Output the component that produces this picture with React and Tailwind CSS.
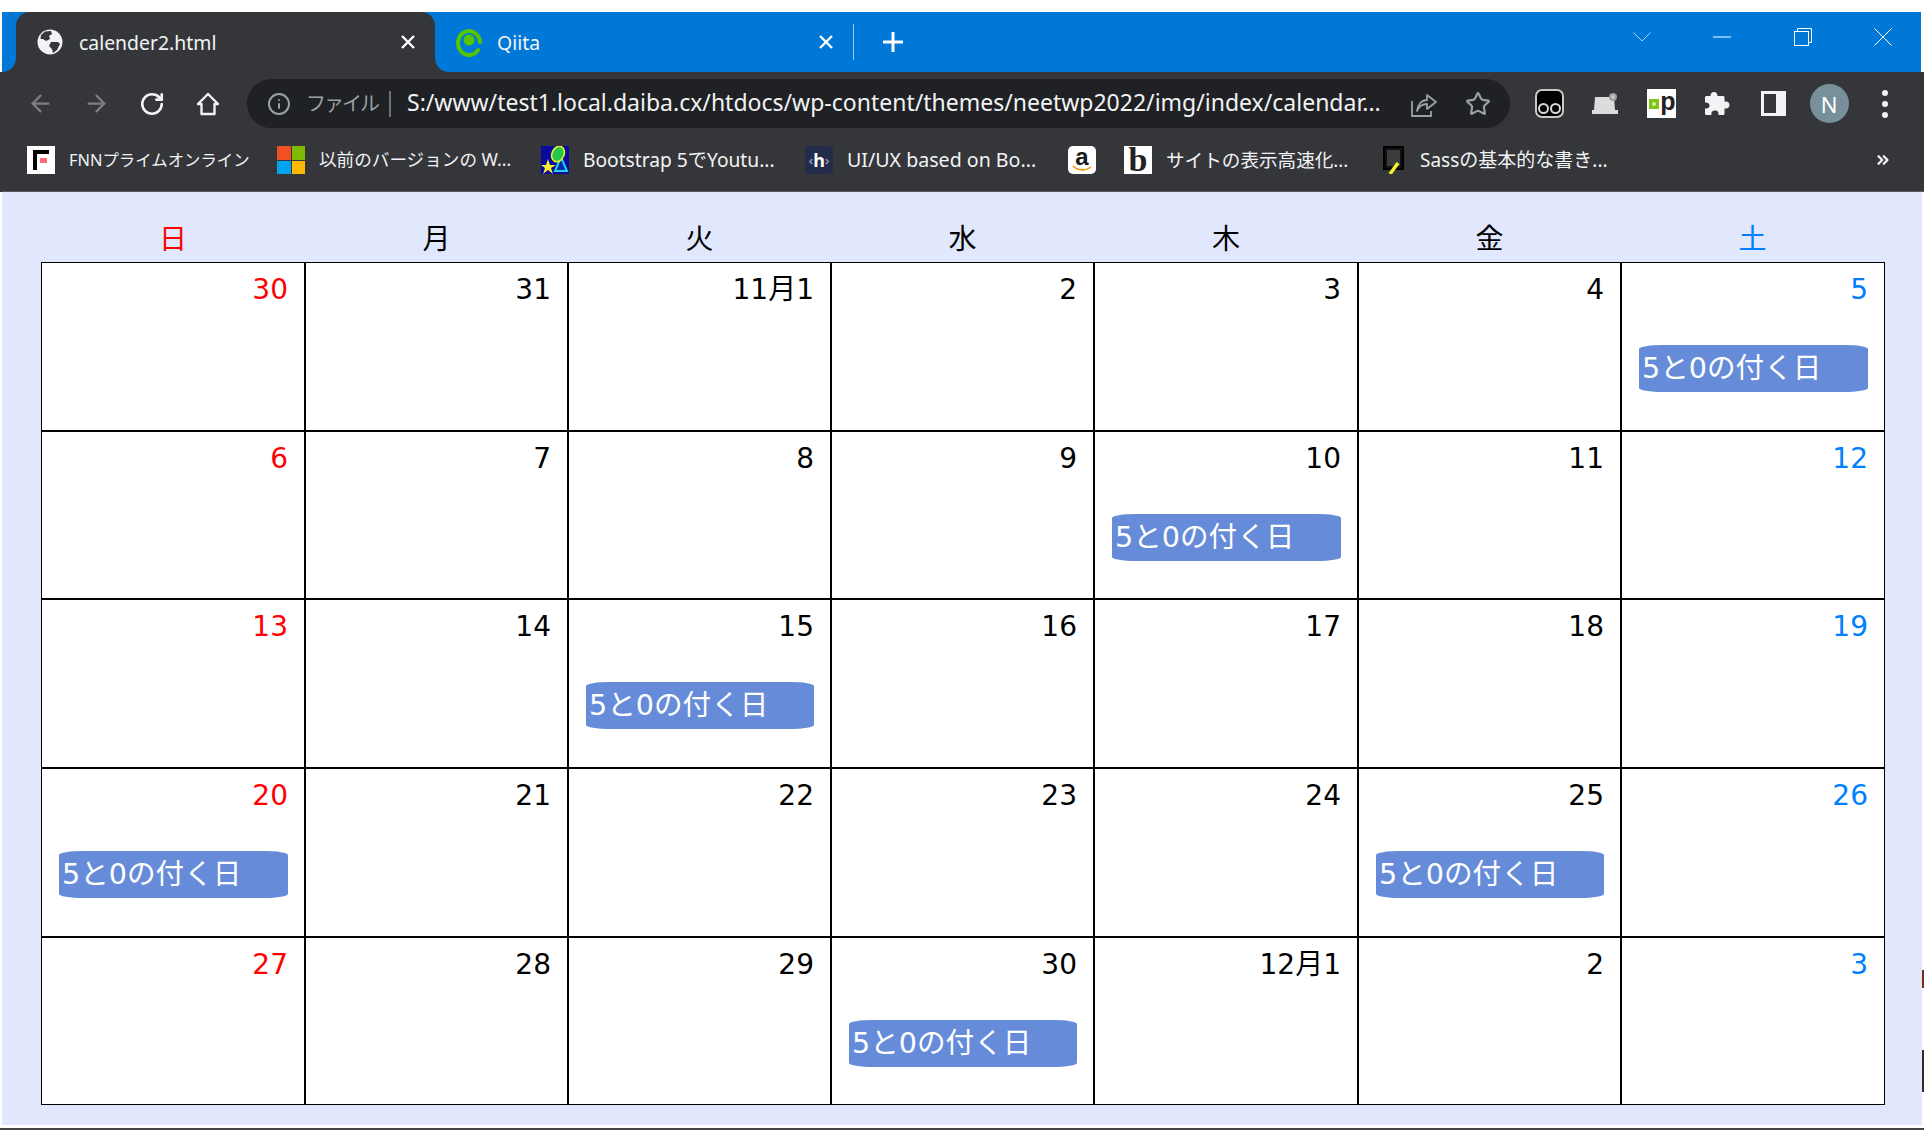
import { ArrowLeft, ArrowRight, RotateCw, Info, Star, ChevronsRight } from "lucide-react";

const UI_FONT = "font-['Noto_Sans','Noto_Sans_CJK_JP',sans-serif]";
const CAL_FONT = "font-['DejaVu_Sans','Noto_Sans_CJK_JP',sans-serif]";

const WEEKDAYS = [
  { label: "日", color: "text-[#ff0000]" },
  { label: "月", color: "text-black" },
  { label: "火", color: "text-black" },
  { label: "水", color: "text-black" },
  { label: "木", color: "text-black" },
  { label: "金", color: "text-black" },
  { label: "土", color: "text-[#0080ff]" },
];

const DAYS = [
  "30", "31", "11月1", "2", "3", "4", "5",
  "6", "7", "8", "9", "10", "11", "12",
  "13", "14", "15", "16", "17", "18", "19",
  "20", "21", "22", "23", "24", "25", "26",
  "27", "28", "29", "30", "12月1", "2", "3",
];

// days of november that end in 5 or 0
const BADGE_INDEXES = [6, 11, 16, 21, 26, 31];

function GlobeIcon() {
  return (
    <svg width="26" height="26" viewBox="0 0 26 26">
      <circle cx="13" cy="13" r="12.5" fill="#f1f3f4" />
      <path d="M8 2.5 L14 2 L15 5 L12 7 L13 10 L9 12 L6 10 L3.5 10 L4 6 Z" fill="#35363a" />
      <path d="M14 13 L21 13 L23 15 L20 21 L16 24 L15 20 L12 17 Z" fill="#35363a" />
    </svg>
  );
}

function QiitaIcon() {
  return (
    <svg width="30" height="30" viewBox="0 0 30 30">
      <path d="M24 23 A11 12 0 1 1 26 15" fill="none" stroke="#55c500" strokeWidth="4" strokeLinecap="round" />
      <circle cx="15" cy="13" r="5.5" fill="#55c500" />
    </svg>
  );
}

function CloseX({ size = 14, width = 2.4 }) {
  return (
    <svg width={size} height={size} viewBox="0 0 14 14">
      <path d="M1 1 L13 13 M13 1 L1 13" stroke="#fff" strokeWidth={width} />
    </svg>
  );
}

function HomeIcon() {
  return (
    <svg width="26" height="26" viewBox="0 0 26 26" fill="none" stroke="#f1f3f4" strokeWidth="2.4">
      <path d="M13 3 L23 13 L19.5 13 L19.5 23 L6.5 23 L6.5 13 L3 13 Z" strokeLinejoin="round" />
    </svg>
  );
}

function ShareIcon() {
  return (
    <svg width="28" height="28" viewBox="0 0 28 28" fill="none" stroke="#9aa0a6" strokeWidth="1.8">
      <path d="M2 11 L2 26 L21 26 L21 21" />
      <path d="M7 21 C8 14 12 10 17 10 L17 5 L26 12 L17 19 L17 14 C13 14 9 16 7 21 Z" strokeLinejoin="round" />
    </svg>
  );
}

function PuzzleIcon() {
  return (
    <svg width="26" height="26" viewBox="0 0 26 26" fill="#f1f3f4">
      <path d="M10 1 C12.5 1 13.5 3 13.5 5 L19 5 C20 5 20.5 5.6 20.5 6.5 L20.5 10.5 C24 10 25.5 12 25.5 14 C25.5 16 24 18 20.5 17.5 L20.5 22.5 C20.5 23.4 20 24 19 24 L14.5 24 C15 20.5 13 19.5 11 19.5 C9 19.5 7 20.5 7.5 24 L2.5 24 C1.6 24 1 23.4 1 22.5 L1 17.5 C4 18 5.5 16.5 5.5 14.5 C5.5 12.5 4 11 1 11.5 L1 6.5 C1 5.6 1.6 5 2.5 5 L6.5 5 C6.5 3 7.5 1 10 1 Z" />
    </svg>
  );
}

function GhosteryIcon() {
  return (
    <div className="w-[29px] h-[29px] rounded-[7px] bg-black border-2 border-[#c8c8c8] flex items-end justify-center gap-[1px] pb-[2px]">
      <span className="w-[11px] h-[11px] rounded-full border-2 border-[#d8d8d8]" />
      <span className="w-[11px] h-[11px] rounded-full border-2 border-[#d8d8d8]" />
    </div>
  );
}

function LaptopIcon() {
  return (
    <svg width="28" height="24" viewBox="0 0 28 24">
      <path d="M4 5 L20 5 L23 4 L24 18 L27 18 L27 22 L1 22 L1 18 L3 18 Z" fill="#dcdcdc" />
      <circle cx="22" cy="5" r="4" fill="#9c9c9c" />
      <circle cx="22" cy="5" r="2" fill="#c4c4c4" />
    </svg>
  );
}

function PocketIcon() {
  return (
    <div className="w-[29px] h-[29px] bg-white flex items-center pl-[2px] gap-[1px]">
      <span className="relative w-[11px] h-[10px] bg-[#7fc31c] flex items-center justify-center">
        <span className="w-[4px] h-[4px] rounded-full bg-[#e6f08c]" />
      </span>
      <span className="font-['Liberation_Sans',sans-serif] font-bold text-[25px] leading-none text-[#222] -mt-[4px]">p</span>
    </div>
  );
}

function SidePanelIcon() {
  return (
    <div className="w-[25px] h-[25px] bg-[#f1f3f4] p-[3px] pr-[10px]">
      <div className="w-full h-full bg-[#35363a]" />
    </div>
  );
}

function WindowsLogo() {
  return (
    <div className="w-[28px] h-[28px] grid grid-cols-2 gap-[1px]">
      <span className="bg-[#f25022]" />
      <span className="bg-[#7fba00]" />
      <span className="bg-[#00a4ef]" />
      <span className="bg-[#ffb900]" />
    </div>
  );
}

function FnnIcon() {
  return (
    <svg width="28" height="28" viewBox="0 0 28 28">
      <rect width="28" height="28" fill="#fff" />
      <path d="M6 4 L22 4 L22 8 L10 8 L10 24 L6 24 Z" fill="#000" />
      <rect x="13" y="12" width="7" height="5" fill="#ff6b74" />
    </svg>
  );
}

function BootstrapIcon() {
  return (
    <svg width="28" height="28" viewBox="0 0 28 28">
      <rect width="28" height="28" fill="#0a0a9c" />
      <path d="M14 25 L20 11 L26 25 Z" fill="#0a2aa8" stroke="#19d6ee" strokeWidth="2" />
      <ellipse cx="17" cy="8" rx="6" ry="8" transform="rotate(25 17 8)" fill="#22c84a" stroke="#f4ef2a" strokeWidth="1.6" />
      <path d="M7 13 L9 19 L15 19 L10 22 L12 28 L7 24 L2 28 L4 22 L0 19 L5 19 Z" fill="#f4ef2a" />
    </svg>
  );
}

function HIcon() {
  return (
    <div className="w-[28px] h-[28px] rounded-[4px] bg-[#232c48] flex items-center justify-center text-white text-[18px] font-bold leading-none">
      <span className="text-[#8791ad] text-[13px]">‹</span>h<span className="text-[#8791ad] text-[13px]">›</span>
    </div>
  );
}

function AmazonIcon() {
  return (
    <div className="relative w-[28px] h-[28px] rounded-[5px] bg-white flex justify-center font-['Liberation_Sans',sans-serif] font-bold text-[24px] leading-[22px] text-[#1a1a1a]">
      a
      <svg className="absolute bottom-[2px] left-[4px]" width="20" height="7" viewBox="0 0 20 7" fill="none" stroke="#f79400" strokeWidth="1.6">
        <path d="M1 1 C6 6 14 6 19 2" />
      </svg>
    </div>
  );
}

function HatenaIcon() {
  return (
    <div className="w-[28px] h-[28px] bg-white flex items-center justify-center font-['Liberation_Serif',serif] font-bold text-[34px] leading-none text-[#222]">
      b
    </div>
  );
}

function SassIcon() {
  return (
    <svg width="28" height="28" viewBox="0 0 28 28">
      <rect x="1" y="1" width="19" height="22" fill="#111" stroke="#000" strokeWidth="2" />
      <rect x="4" y="4" width="13" height="16" fill="#3c3c3c" />
      <path d="M7 28 L15 17" stroke="#f5ee2a" strokeWidth="3.5" />
    </svg>
  );
}

const BOOKMARKS = [
  { icon: <FnnIcon />, label: "FNNプライムオンライン", width: "w-[250px] gap-[14px]", size: "text-[16.4px]" },
  { icon: <WindowsLogo />, label: "以前のバージョンの W...", width: "w-[264px] gap-[14px]", size: "text-[17.6px]" },
  { icon: <BootstrapIcon />, label: "Bootstrap 5でYoutu...", width: "w-[264px] gap-[14px]", size: "text-[19.2px]" },
  { icon: <HIcon />, label: "UI/UX based on Bo...", width: "w-[263px] gap-[14px]", size: "text-[19.6px]" },
  { icon: <AmazonIcon />, label: "", width: "w-[56px]", size: "" },
  { icon: <HatenaIcon />, label: "サイトの表示高速化...", width: "w-[259px] gap-[14px]", size: "text-[18.6px]" },
  { icon: <SassIcon />, label: "Sassの基本的な書き...", width: "w-[491px] gap-[9px]", size: "text-[19px]" },
];

function Tab({ active, icon, title, className, children }) {
  return (
    <div className={`relative h-full flex items-center ${active ? "bg-[#35363a] rounded-t-[14px]" : ""} ${className}`}>
      {icon}
      <span className="text-[19.4px] leading-none text-[#f1f3f4] mt-[1px]">{title}</span>
      {children}
    </div>
  );
}

function ToolbarSlot({ children, className = "" }) {
  return <div className={`w-[56px] shrink-0 flex items-center justify-center ${className}`}>{children}</div>;
}

function TitleBar() {
  return (
    <div className="h-[60px] bg-[#0078d7] flex items-center">
      <Tab
        active
        title="calender2.html"
        className="ml-[14px] w-[419px] pl-[21px] gap-[16px]"
        icon={<GlobeIcon />}
      >
        <span className="absolute bottom-0 -left-[14px] w-[14px] h-[14px] bg-[#35363a]">
          <span className="block w-full h-full bg-[#0078d7] rounded-br-[14px]" />
        </span>
        <span className="absolute bottom-0 -right-[14px] w-[14px] h-[14px] bg-[#35363a]">
          <span className="block w-full h-full bg-[#0078d7] rounded-bl-[14px]" />
        </span>
        <span className="absolute top-[23px] left-[385px]"><CloseX /></span>
      </Tab>
      <Tab title="Qiita" className="w-[419px] pl-[19px] gap-[13px]" icon={<QiitaIcon />}>
        <span className="absolute top-[23px] left-[384px]"><CloseX /></span>
      </Tab>
      <span className="w-px h-[36px] bg-[#9cc9ee] -ml-[1px]" />
      <span className="ml-[28px] w-[22px] h-[22px]">
        <svg width="22" height="22" viewBox="0 0 22 22">
          <path d="M11 1 L11 21 M1 11 L21 11" stroke="#fff" strokeWidth="3" />
        </svg>
      </span>
      <div className="ml-auto flex items-center -mt-[10px] text-white">
        <svg width="18" height="10" viewBox="0 0 18 10" fill="none" stroke="#a9d3f5" strokeWidth="1">
          <path d="M0.5 0.5 L9 9 L17.5 0.5" />
        </svg>
        <svg className="ml-[62px]" width="18" height="2" viewBox="0 0 18 2">
          <path d="M0 1 L18 1" stroke="#fff" strokeWidth="1" />
        </svg>
        <svg className="ml-[63px]" width="18" height="18" viewBox="0 0 18 18" fill="none" stroke="#fff" strokeWidth="1">
          <rect x="0.5" y="3.5" width="14" height="14" />
          <path d="M3.5 3.5 L3.5 0.5 L17.5 0.5 L17.5 14.5 L14.5 14.5" />
        </svg>
        <svg className="ml-[62px] mr-[29px]" width="18" height="18" viewBox="0 0 18 18" stroke="#fff" strokeWidth="1">
          <path d="M0.5 0.5 L17.5 17.5 M17.5 0.5 L0.5 17.5" />
        </svg>
      </div>
    </div>
  );
}

function AddressRow() {
  return (
    <div className="h-[62px] pt-[7px] pl-[10px] flex items-start">
      <ToolbarSlot className="h-[49px]"><ArrowLeft size={27} color="#7c7e82" strokeWidth={2} /></ToolbarSlot>
      <ToolbarSlot className="h-[49px]"><ArrowRight size={27} color="#7c7e82" strokeWidth={2} /></ToolbarSlot>
      <ToolbarSlot className="h-[49px]"><RotateCw size={26} color="#f1f3f4" strokeWidth={2.4} /></ToolbarSlot>
      <ToolbarSlot className="h-[49px]"><HomeIcon /></ToolbarSlot>
      <div className="ml-[11px] w-[1263px] h-[49px] rounded-full bg-[#202124] flex items-center shrink-0">
        <Info size={24} color="#9aa0a6" strokeWidth={2} className="ml-[20px]" />
        <span className="ml-[15px] w-[69px] text-[20px] leading-none tracking-[-2px] text-[#9aa0a6] whitespace-nowrap">ファイル</span>
        <span className="ml-[14px] w-[2px] h-[26px] bg-[#6e7175]" />
        <span className="ml-[16px] w-[976px] text-[23px] leading-none -mt-[2px] text-[#f1f3f4] whitespace-nowrap">
          S:/www/test1.local.daiba.cx/htdocs/wp-content/themes/neetwp2022/img/index/calendar...
        </span>
        <span className="ml-[27px]"><ShareIcon /></span>
        <Star size={26} color="#9aa0a6" strokeWidth={2} className="ml-[27px]" />
      </div>
      <div className="ml-[11px] h-[49px] flex items-center">
        <ToolbarSlot><GhosteryIcon /></ToolbarSlot>
        <ToolbarSlot><LaptopIcon /></ToolbarSlot>
        <ToolbarSlot><PocketIcon /></ToolbarSlot>
        <ToolbarSlot><PuzzleIcon /></ToolbarSlot>
        <ToolbarSlot className="w-[55px]"><SidePanelIcon /></ToolbarSlot>
        <ToolbarSlot>
          <span className="w-[39px] h-[39px] rounded-full bg-[#78909c] flex items-center justify-center text-[22px] leading-none text-white">N</span>
        </ToolbarSlot>
        <ToolbarSlot className="w-[54px] flex-col gap-[5px]">
          <span className="w-[6px] h-[6px] rounded-full bg-[#f1f3f4]" />
          <span className="w-[6px] h-[6px] rounded-full bg-[#f1f3f4]" />
          <span className="w-[6px] h-[6px] rounded-full bg-[#f1f3f4]" />
        </ToolbarSlot>
      </div>
    </div>
  );
}

function BookmarksBar() {
  return (
    <div className="h-[58px] pl-[25px] pb-[5px] flex items-center border-b border-[#5a5b5f]">
      {BOOKMARKS.map((b, i) => (
        <div key={i} className={`${b.width} shrink-0 flex items-center`}>
          <span className="shrink-0">{b.icon}</span>
          {b.label && <span className={`${b.size} leading-none text-[#f1f3f4] whitespace-nowrap`}>{b.label}</span>}
        </div>
      ))}
      <ChevronsRight size={18} color="#f1f3f4" strokeWidth={3} />
    </div>
  );
}

function DayCell({ day, index }) {
  const column = index % 7;
  const row = Math.floor(index / 7);
  const color = column === 0 ? "text-[#ff0000]" : column === 6 ? "text-[#0080ff]" : "text-black";
  return (
    <div className={`pl-[17px] pr-[16px] pt-[12px] border-black ${column < 6 ? "border-r-2" : ""} ${row < 4 ? "border-b-2" : ""}`}>
      <div className={`text-right text-[28px] leading-[30px] ${color}`}>{day}</div>
      {BADGE_INDEXES.includes(index) && (
        <div className="mt-[40px] h-[47px] bg-[#668cd9] rounded-[24px/4px] pl-[3px] text-white text-[28.6px] leading-[46px] whitespace-nowrap">
          5と0の付く日
        </div>
      )}
    </div>
  );
}

function Calendar() {
  return (
    <div className={`flex-1 bg-[#e1e7fd] pl-[39px] ${CAL_FONT}`}>
      <div className="w-[1844px] h-[70px] pl-px grid grid-cols-[264px_263px_263px_263px_264px_263px_1fr]">
        {WEEKDAYS.map((d) => (
          <div key={d.label} className={`pt-[28px] pr-[2px] text-center text-[28px] leading-[40px] ${d.color}`}>{d.label}</div>
        ))}
      </div>
      <div className="w-[1844px] h-[843px] bg-white border border-black grid grid-cols-[264px_263px_263px_263px_264px_263px_1fr] grid-rows-[169px_168px_169px_169px_1fr]">
        {DAYS.map((day, i) => (
          <DayCell key={i} day={day} index={i} />
        ))}
      </div>
    </div>
  );
}

export default function App() {
  return (
    <div className={`w-[1924px] h-[1130px] overflow-hidden bg-white flex flex-col ${UI_FONT}`}>
      <div className="pt-[12px] pl-[2px] pr-[3px]">
        <TitleBar />
      </div>
      <div className="pl-[2px] bg-[#35363a]">
        <AddressRow />
        <BookmarksBar />
      </div>
      <div className="flex-1 flex pl-[2px] pb-[3px]">
        <Calendar />
        {/* sliver of the window behind */}
        <div className="w-[2px] flex flex-col">
          <span className="mt-[778px] h-[18px] bg-[#7a2a14]" />
          <span className="mt-[62px] h-[42px] bg-[#332c22]" />
        </div>
      </div>
      <div className="h-[2px] bg-[#444]" />
    </div>
  );
}
